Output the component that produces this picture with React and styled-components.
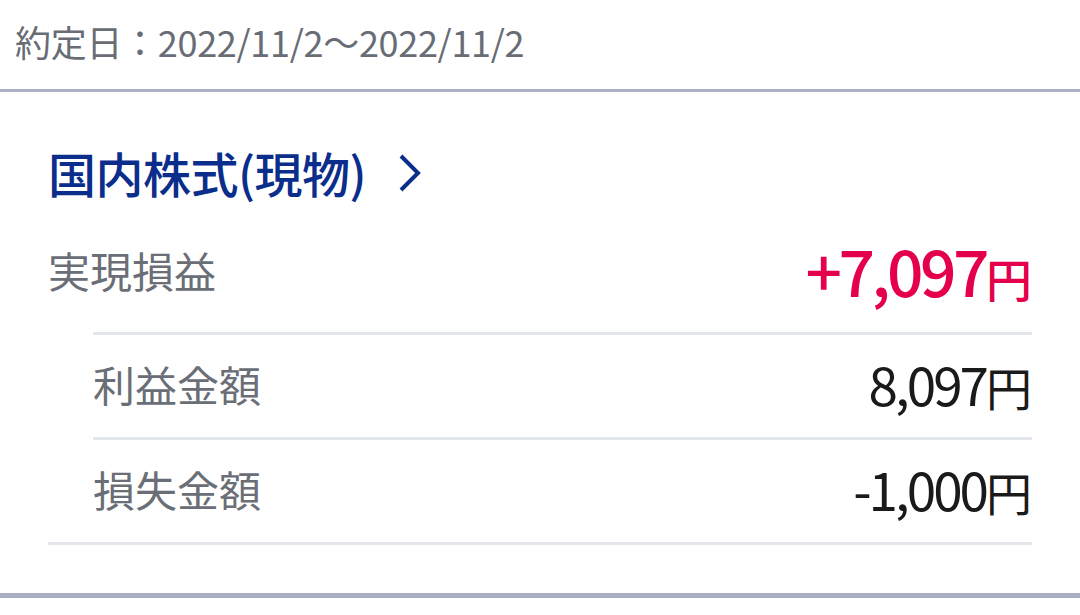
import React from "react";
import styled, { createGlobalStyle } from "styled-components";

const GlobalStyle = createGlobalStyle`
  html, body {
    margin : 0;
    padding : 0;
    background : #ffffff;
  }
  body {
    font-family : "Noto Sans CJK JP", "Noto Sans", sans-serif;
  }
`;

const Page = styled.div`
  width : 1080px;
  background : #ffffff;
`;

const PeriodBar = styled.div`
  height : 92px;
  display : flex;
  align-items : center;
  padding-left : 15px;
  padding-bottom : 8px;
  box-sizing : border-box;
  border-bottom : 3px solid #a8b0c2;
  font-size : 36px;
  color : #686c74;
  letter-spacing : -0.3px;
`;

const Section = styled.section`
  padding : 48px 48px 48px;
  border-bottom : 5px solid #a8b0c2;
`;

const TitleLink = styled.a`
  display : flex;
  align-items : center;
  height : 70px;
  margin-bottom : 20px;
  padding-bottom : 6px;
  box-sizing : border-box;
  color : #0b2d8b;
  font-size : 48px;
  font-weight : 500;
  text-decoration : none;
  letter-spacing : -0.5px;
  cursor : pointer;
  svg {
    margin-left : 32px;
    margin-top : 2px;
  }
`;

const Group = styled.div`
  border-bottom : 3px solid #e3e6ed;
`;

const Row = styled.div`
  height : ${props => props.$indent ? '105px' : '102px'};
  box-sizing : border-box;
  display : flex;
  align-items : center;
  justify-content : space-between;
  padding-bottom : ${props => props.$indent ? '6px' : '24px'};
  margin-left : ${props => props.$indent ? '45px' : '0'};
  border-top : ${props => props.$indent ? '3px solid #e3e6ed' : 'none'};
`;

const Label = styled.div`
  font-size : 42px;
  color : #6a6e76;
`;

const Amount = styled.div`
  display : flex;
  align-items : baseline;
  color : ${props => props.$profit ? '#e4004b' : '#1a1a1a'};
  font-weight : ${props => props.$profit ? 500 : 400};
`;

const Num = styled.span`
  font-size : ${props => props.$size}px;
  letter-spacing : ${props => props.$spacing}px;
`;

const Yen = styled.span`
  font-size : 46px;
`;

const Chevron = () => (
  <svg width="24" height="38" viewBox="0 0 24 38">
    <polyline points="3,2 20,19 3,36" fill="none" stroke="#0b2d8b" strokeWidth="4" />
  </svg>
);

const rows = [
  { label : '利益金額', value : '8,097' },
  { label : '損失金額', value : '-1,000' },
];

const App = () => {
  return (
    <Page>
      <GlobalStyle />
      <PeriodBar>約定日：2022/11/2〜2022/11/2</PeriodBar>
      <Section>
        <TitleLink>
          国内株式(現物)
          <Chevron />
        </TitleLink>
        <Group>
          <Row>
            <Label>実現損益</Label>
            <Amount $profit>
              <Num $size={64} $spacing={-3.5}>+7,097</Num>
              <Yen>円</Yen>
            </Amount>
          </Row>
          {rows.map(r => (
            <Row $indent key={r.label}>
              <Label>{r.label}</Label>
              <Amount>
                <Num $size={53} $spacing={-3}>{r.value}</Num>
                <Yen>円</Yen>
              </Amount>
            </Row>
          ))}
        </Group>
      </Section>
    </Page>
  );
};

export default App;
